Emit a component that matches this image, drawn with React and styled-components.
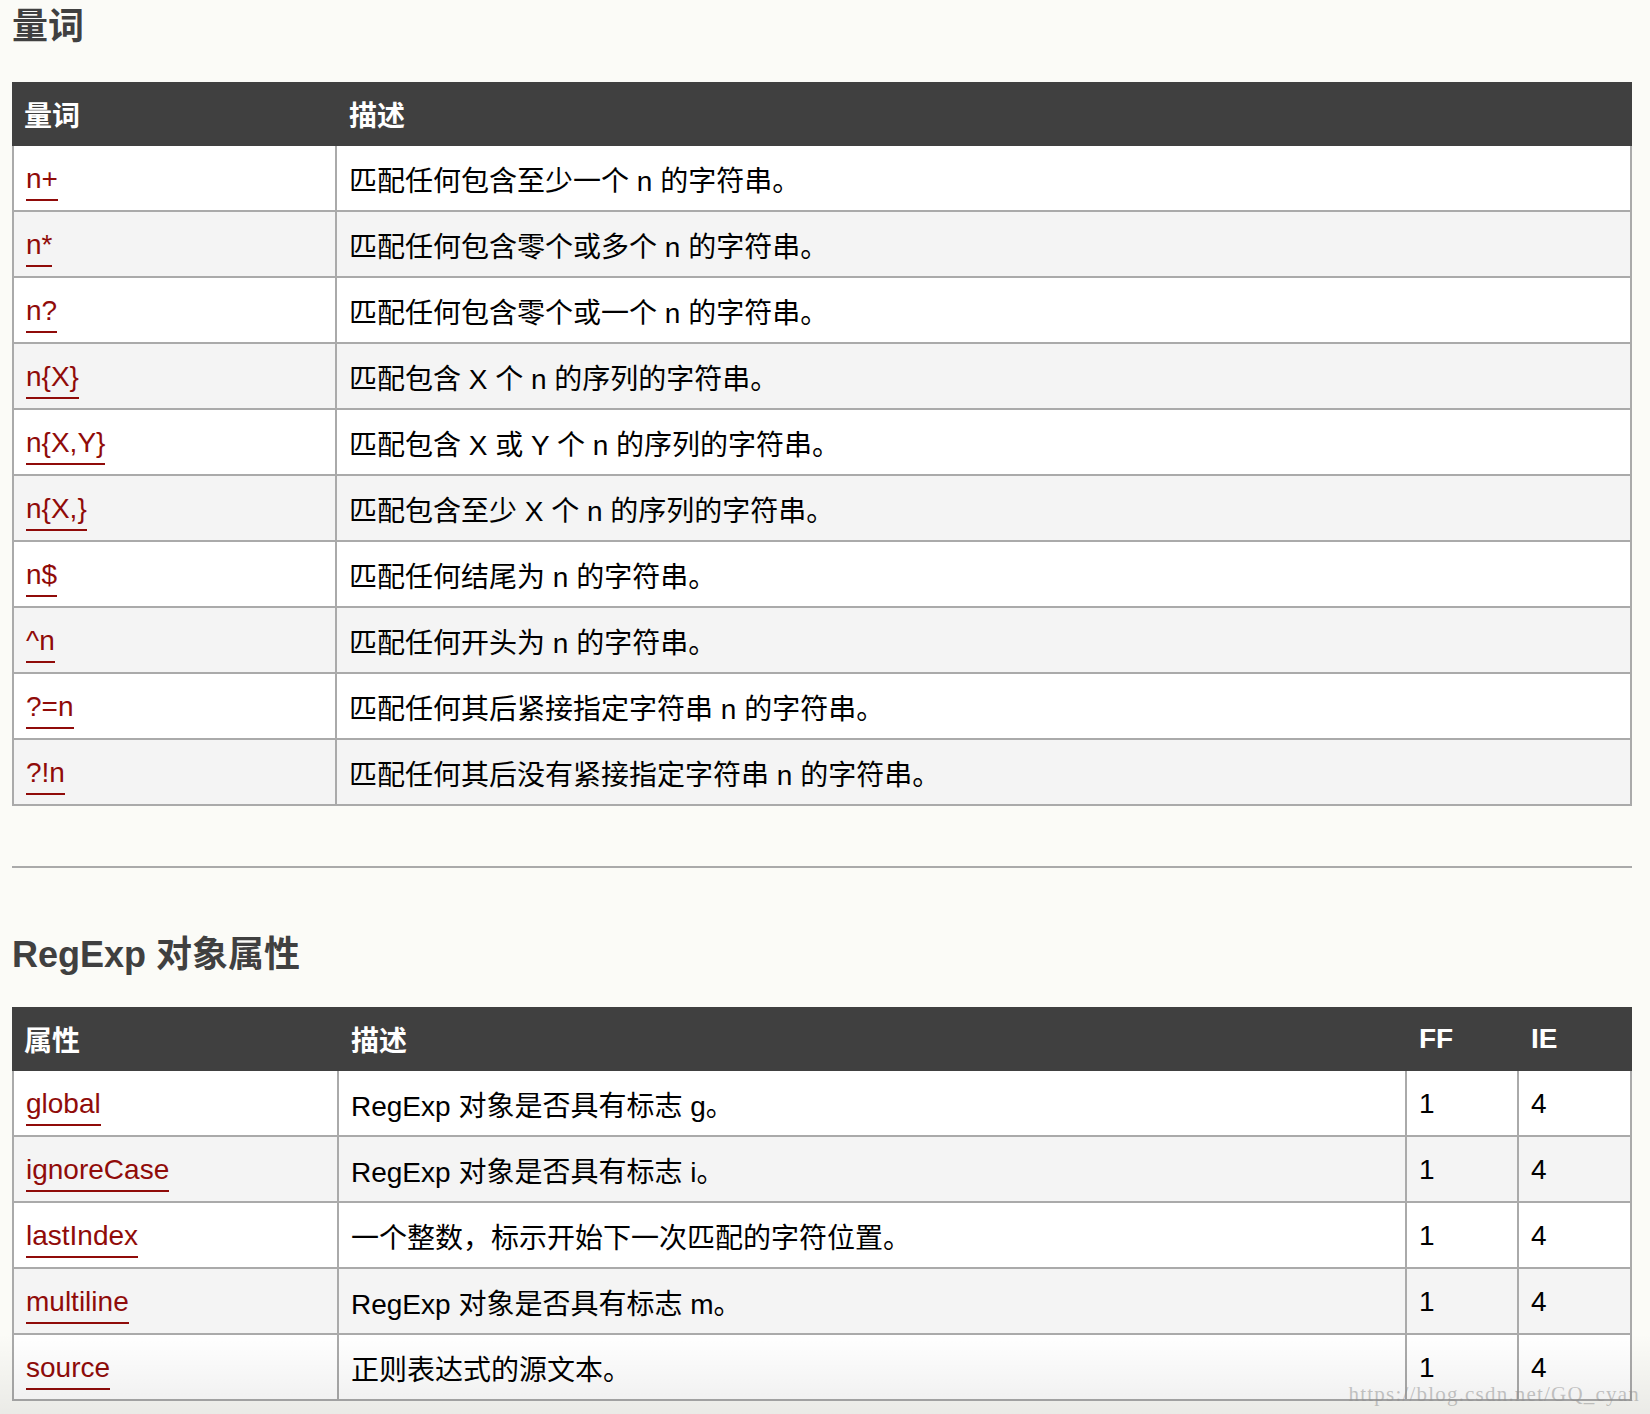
import React from 'react'
import styled, { createGlobalStyle } from 'styled-components'

const GlobalStyle = createGlobalStyle`
  * { box-sizing: border-box; }
  body {
    margin: 0;
    background: #fbfbf7;
    font-family: "Liberation Sans", "Noto Sans CJK SC", sans-serif;
  }
`

const Page = styled.div`
  position: relative;
  height: 1414px;
  overflow: hidden;
  padding: 0 18px 0 12px;
`

const Title = styled.h2`
  margin: ${p => p.$top || 0}px 0 0;
  height: 54px;
  line-height: 54px;
  font-size: 36px;
  font-weight: bold;
  color: #404040;
`

const Table = styled.table`
  width: 1620px;
  table-layout: fixed;
  border-collapse: separate;
  border-spacing: 0;
  font-size: 28px;
  margin-top: ${p => p.$top}px;
`

const Th = styled.th`
  width: ${p => p.$w}px;
  height: 64px;
  padding: 0 12px;
  background: #404040;
  color: #fff;
  font-weight: bold;
  text-align: left;
  vertical-align: middle;
`

const Row = styled.tr`
  background: ${p => (p.$odd ? '#f4f4f4' : '#fff')};
`

const Td = styled.td`
  height: 66px;
  padding: 1px 12px 0;
  color: #000;
  vertical-align: middle;
  border-right: 2px solid #aaa;
  border-bottom: 2px solid #aaa;
  white-space: nowrap;

  &:first-child {
    border-left: 2px solid #aaa;
  }
`

const Link = styled.a`
  color: #900b09;
  text-decoration: none;
  padding-bottom: 5px;
  border-bottom: 2px solid #900b09;
`

const Rule = styled.hr`
  margin: 60px 0 0;
  border: none;
  border-top: 2px solid #aaa;
  width: 1620px;
`

const Fade = styled.div`
  position: absolute;
  left: 0;
  right: 0;
  bottom: 0;
  height: 80px;
  background: linear-gradient(rgba(0, 0, 0, 0), rgba(0, 0, 0, 0.065));
  pointer-events: none;
`

const Watermark = styled.div`
  position: absolute;
  right: 10px;
  bottom: 7px;
  font-family: "Liberation Serif", serif;
  font-size: 21px;
  letter-spacing: 1.2px;
  color: rgba(140, 140, 140, 0.5);
`

const quantifiers = [
  ['n+', '匹配任何包含至少一个 n 的字符串。'],
  ['n*', '匹配任何包含零个或多个 n 的字符串。'],
  ['n?', '匹配任何包含零个或一个 n 的字符串。'],
  ['n{X}', '匹配包含 X 个 n 的序列的字符串。'],
  ['n{X,Y}', '匹配包含 X 或 Y 个 n 的序列的字符串。'],
  ['n{X,}', '匹配包含至少 X 个 n 的序列的字符串。'],
  ['n$', '匹配任何结尾为 n 的字符串。'],
  ['^n', '匹配任何开头为 n 的字符串。'],
  ['?=n', '匹配任何其后紧接指定字符串 n 的字符串。'],
  ['?!n', '匹配任何其后没有紧接指定字符串 n 的字符串。'],
]

const props = [
  ['global', 'RegExp 对象是否具有标志 g。'],
  ['ignoreCase', 'RegExp 对象是否具有标志 i。'],
  ['lastIndex', '一个整数，标示开始下一次匹配的字符位置。'],
  ['multiline', 'RegExp 对象是否具有标志 m。'],
  ['source', '正则表达式的源文本。'],
]

export default function App() {
  return (
    <Page>
      <GlobalStyle />
      <Title>量词</Title>
      <Table $top={28}>
        <thead>
          <tr>
            <Th $w={325}>量词</Th>
            <Th $w={1295}>描述</Th>
          </tr>
        </thead>
        <tbody>
          {quantifiers.map(([q, d], i) => (
            <Row key={q} $odd={i % 2 === 1}>
              <Td><Link href="#">{q}</Link></Td>
              <Td>{d}</Td>
            </Row>
          ))}
        </tbody>
      </Table>

      <Rule />

      <Title $top={60}>RegExp 对象属性</Title>
      <Table $top={25}>
        <thead>
          <tr>
            <Th $w={327}>属性</Th>
            <Th $w={1068}>描述</Th>
            <Th $w={112}>FF</Th>
            <Th $w={113}>IE</Th>
          </tr>
        </thead>
        <tbody>
          {props.map(([p, d], i) => (
            <Row key={p} $odd={i % 2 === 1}>
              <Td><Link href="#">{p}</Link></Td>
              <Td>{d}</Td>
              <Td>1</Td>
              <Td>4</Td>
            </Row>
          ))}
        </tbody>
      </Table>

      <Fade />
      <Watermark>https://blog.csdn.net/GQ_cyan</Watermark>
    </Page>
  )
}
